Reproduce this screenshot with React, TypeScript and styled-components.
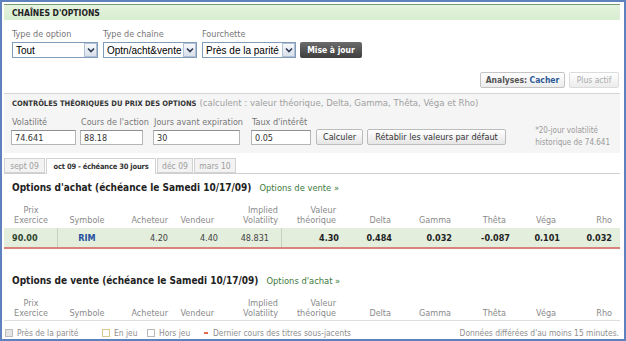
import React from "react";
import styled, { createGlobalStyle } from "styled-components";

const GlobalStyle = createGlobalStyle`
  html, body { margin: 0; padding: 0; background: #fff; }
  body { font-family: "DejaVu Sans Condensed", "DejaVu Sans", sans-serif; }
  * { box-sizing: border-box; }
`;

type Col = { w: number; head: string[]; ha: "left" | "center" | "right"; da: "left" | "center" | "right"; hp: number; dp: number };

const columns: Col[] = [
  { w: 54, head: ["Prix", "Exercice"], ha: "center", da: "left", hp: 0, dp: 8 },
  { w: 58, head: ["Symbole"], ha: "center", da: "center", hp: 0, dp: 0 },
  { w: 56, head: ["Acheteur"], ha: "right", da: "right", hp: 4, dp: 4 },
  { w: 46, head: ["Vendeur"], ha: "right", da: "right", hp: 4, dp: 0 },
  { w: 64, head: ["Implied", "Volatility"], ha: "right", da: "right", hp: 4, dp: 12 },
  { w: 58, head: ["Valeur", "théorique"], ha: "right", da: "right", hp: 4, dp: 1 },
  { w: 55, head: ["Delta"], ha: "right", da: "right", hp: 4, dp: 3 },
  { w: 60, head: ["Gamma"], ha: "right", da: "right", hp: 4, dp: 3 },
  { w: 55, head: ["Thêta"], ha: "right", da: "right", hp: 4, dp: 0 },
  { w: 50, head: ["Véga"], ha: "right", da: "right", hp: 4, dp: 0 },
  { w: 60, head: ["Rho"], ha: "right", da: "right", hp: 8, dp: 8 },
];

const callRow = [
  { v: "90.00", bold: true, tone: "strike" },
  { v: "RIM", bold: true, tone: "link" },
  { v: "4.20" },
  { v: "4.40" },
  { v: "48.831" },
  { v: "4.30", bold: true },
  { v: "0.484", bold: true },
  { v: "0.032", bold: true },
  { v: "-0.087", bold: true },
  { v: "0.101", bold: true },
  { v: "0.032", bold: true },
];

const gridTemplate = columns.map((c) => `${c.w}px`).join(" ");

const Chevron = () => (
  <svg width="8" height="6" viewBox="0 0 8 6">
    <path d="M1 1.5 L4 4.5 L7 1.5" fill="none" stroke="#2b3a55" strokeWidth="1.6" />
  </svg>
);

const TableHead: React.FC<{ underline?: boolean }> = ({ underline }) => (
  <HeadRow $underline={underline}>
    {columns.map((c, i) => (
      <HeadCell key={i} $align={c.ha} $pad={c.hp}>
        {c.head.map((l, j) => (
          <div key={j}>{l}</div>
        ))}
      </HeadCell>
    ))}
  </HeadRow>
);

export default function App() {
  return (
    <>
      <GlobalStyle />
      <Frame>
        <Header>CHAÎNES D'OPTIONS</Header>

        <Filters>
          <Field $w={86}>
            <FieldLabel>Type de option</FieldLabel>
            <Select>
              Tout
              <Arrow>
                <Chevron />
              </Arrow>
            </Select>
          </Field>
          <Field $w={94}>
            <FieldLabel>Type de chaîne</FieldLabel>
            <Select>
              Optn/acht&amp;vente
              <Arrow>
                <Chevron />
              </Arrow>
            </Select>
          </Field>
          <Field $w={94}>
            <FieldLabel>Fourchette</FieldLabel>
            <Select>
              Près de la parité
              <Arrow>
                <Chevron />
              </Arrow>
            </Select>
          </Field>
          <DarkButton>Mise à jour</DarkButton>
        </Filters>

        <AnalysesRow>
          <LightButton $w={85}>
            <Strong>Analyses:</Strong>&nbsp;<BlueStrong>Cacher</BlueStrong>
          </LightButton>
          <LightButton $w={50} $muted>
            Plus actif
          </LightButton>
        </AnalysesRow>

        <Theory>
          <TheoryTitle>
            <TheoryCaps>CONTRÔLES THÉORIQUES DU PRIX DES OPTIONS</TheoryCaps>
            <Muted>(calculent : valeur théorique, Delta, Gamma, Thêta, Véga et Rho)</Muted>
          </TheoryTitle>
          <TheoryRow>
            <InputField $w={69}>
              <FieldLabel>Volatilité</FieldLabel>
              <TextInput $w={65}>74.641</TextInput>
            </InputField>
            <InputField $w={73}>
              <FieldLabel>Cours de l'action</FieldLabel>
              <TextInput $w={63}>88.18</TextInput>
            </InputField>
            <InputField $w={98}>
              <FieldLabel>Jours avant expiration</FieldLabel>
              <TextInput $w={87}>30</TextInput>
            </InputField>
            <InputField $w={64}>
              <FieldLabel>Taux d'intérêt</FieldLabel>
              <TextInput $w={60}>0.05</TextInput>
            </InputField>
            <GreyButton $w={47}>Calculer</GreyButton>
            <GreyButton $w={139}>Rétablir les valeurs par défaut</GreyButton>
            <Note>
              *20-jour volatilité
              <br />
              historique de 74.641
            </Note>
          </TheoryRow>
        </Theory>

        <Tabs>
          <Tab $w={41}>sept 09</Tab>
          <Tab $w={110} $active>
            oct 09 - échéance 30 jours
          </Tab>
          <Tab $w={36}>déc 09</Tab>
          <Tab $w={42}>mars 10</Tab>
        </Tabs>

        <SectionTitle>
          Options d'achat (échéance le Samedi 10/17/09)
          <GreenLink>Options de vente »</GreenLink>
        </SectionTitle>
        <TableHead />
        <DataRow>
          {callRow.map((d, i) => (
            <DataCell
              key={i}
              $align={columns[i].da}
              $pad={columns[i].dp}
              $bold={!!d.bold}
              $tone={d.tone}
              $divider={i === 0 || i === 4}
            >
              {d.v}
            </DataCell>
          ))}
        </DataRow>

        <SectionTitle $gap={26}>
          Options de vente (échéance le Samedi 10/17/09)
          <GreenLink>Options d'achat »</GreenLink>
        </SectionTitle>
        <TableHead underline />

        <Footer>
          <Legend $w={97}>
            <Swatch $bg="#e4e4e4" $border="#bdbdbd" />
            Près de la parité
          </Legend>
          <Legend $w={45}>
            <Swatch $bg="#fff" $border="#d8c98a" />
            En jeu
          </Legend>
          <Legend $w={57}>
            <Swatch $bg="#fff" $border="#b8b8b8" />
            Hors jeu
          </Legend>
          <Legend>
            <Dash />
            Dernier cours des titres sous-jacents
          </Legend>
          <Delayed>Données différées d'au moins 15 minutes.</Delayed>
        </Footer>
      </Frame>
    </>
  );
}

const Frame = styled.div`
  width: 626px;
  height: 341px;
  border: 2px solid #5f82bf;
  padding: 2px 4px 0 2px;
  overflow: hidden;
  color: #333;
  font-size: 9px;
`;

const Header = styled.div`
  height: 16px;
  border-top: 1px solid #7a9a7a;
  background: linear-gradient(#e4f3de, #d8edd0);
  padding-left: 8px;
  display: flex;
  align-items: center;
  font-weight: bold;
  font-size: 8.5px;
  color: #222;
`;

const Filters = styled.div`
  display: flex;
  align-items: flex-end;
  gap: 5px;
  padding: 9px 0 0 8px;
`;

const Field = styled.div<{ $w: number }>`
  display: flex;
  flex-direction: column;
  gap: 3px;
  width: ${(p) => p.$w}px;
`;

const FieldLabel = styled.span`
  font-size: 9px;
  line-height: 10px;
  color: #777;
  white-space: nowrap;
`;

const Select = styled.div`
  height: 16px;
  border: 1px solid #7f9db9;
  background: #fff;
  display: flex;
  align-items: center;
  padding-left: 3px;
  font-family: "Liberation Sans", Arial, sans-serif;
  font-size: 10px;
  color: #000;
  white-space: nowrap;
`;

const Arrow = styled.span`
  margin-left: auto;
  width: 13px;
  height: 14px;
  border: 1px solid #b2c0d6;
  background: linear-gradient(#f7f8fb, #d9e0ea);
  display: flex;
  align-items: center;
  justify-content: center;
`;

const DarkButton = styled.div`
  margin-left: -1px;
  width: 62px;
  height: 16px;
  border-radius: 2px;
  background: linear-gradient(#6b6b6b, #3e3e3e);
  color: #fff;
  font-weight: bold;
  font-size: 8.5px;
  display: flex;
  align-items: center;
  justify-content: center;
`;

const AnalysesRow = styled.div`
  display: flex;
  justify-content: flex-end;
  gap: 4px;
  margin-top: 14px;
  padding-right: 1px;
`;

const LightButton = styled.div<{ $w: number; $muted?: boolean }>`
  width: ${(p) => p.$w}px;
  height: 16px;
  border: 1px solid ${(p) => (p.$muted ? "#dcdcdc" : "#c4c4c4")};
  border-radius: 2px;
  background: linear-gradient(#ffffff, #ececec);
  color: ${(p) => (p.$muted ? "#aaa" : "#555")};
  font-size: 8.5px;
  display: flex;
  align-items: center;
  justify-content: center;
  white-space: nowrap;
`;

const Strong = styled.span`
  font-weight: bold;
  color: #555;
`;

const BlueStrong = styled.span`
  font-weight: bold;
  color: #2d5b98;
`;

const Theory = styled.div`
  margin-top: 5px;
  height: 60px;
  border-top: 1px solid #d6d6d6;
  background: #f5f5f5;
  padding: 4px 0 0 8px;
`;

const TheoryTitle = styled.div`
  display: flex;
  align-items: baseline;
  gap: 3px;
  line-height: 10px;
  white-space: nowrap;
`;

const TheoryCaps = styled.span`
  font-weight: bold;
  font-size: 7.5px;
  color: #333;
`;

const Muted = styled.span`
  font-size: 9.5px;
  color: #a0a0a0;
`;

const TheoryRow = styled.div`
  display: flex;
  align-items: flex-end;
  margin-top: 8px;
`;

const InputField = styled.div<{ $w: number }>`
  display: flex;
  flex-direction: column;
  gap: 3px;
  width: ${(p) => p.$w}px;
`;

const TextInput = styled.div<{ $w: number }>`
  width: ${(p) => p.$w}px;
  height: 15px;
  margin-left: -1px;
  border: 1px solid #b5b5b5;
  border-top-color: #8f8f8f;
  background: #fff;
  padding-left: 3px;
  display: flex;
  align-items: center;
  color: #333;
`;

const GreyButton = styled.div<{ $w: number }>`
  width: ${(p) => p.$w}px;
  height: 16px;
  margin-right: 4px;
  border: 1px solid #bcbcbc;
  border-radius: 2px;
  background: linear-gradient(#ffffff, #e6e6e6);
  color: #333;
  display: flex;
  align-items: center;
  justify-content: center;
  white-space: nowrap;
`;

const Note = styled.div`
  margin-left: auto;
  margin-right: 10px;
  margin-bottom: -4px;
  line-height: 12px;
  font-size: 8px;
  color: #9a9a9a;
  white-space: nowrap;
`;

const Tabs = styled.div`
  margin-top: 5px;
  height: 16px;
  display: flex;
  gap: 1px;
  border-bottom: 1px solid #cfcfcf;
`;

const Tab = styled.div<{ $active?: boolean; $w: number }>`
  width: ${(p) => p.$w}px;
  height: ${(p) => (p.$active ? 16 : 15)}px;
  display: flex;
  align-items: center;
  justify-content: center;
  border: 1px solid #d2d2d2;
  border-bottom: ${(p) => (p.$active ? "none" : "1px solid #d2d2d2")};
  background: ${(p) => (p.$active ? "#fff" : "#f3f3f3")};
  color: ${(p) => (p.$active ? "#333" : "#a0a0a0")};
  font-weight: ${(p) => (p.$active ? "bold" : "normal")};
  font-size: ${(p) => (p.$active ? 7.5 : 8.5)}px;
  letter-spacing: ${(p) => (p.$active ? "-0.2px" : "0")};
  white-space: nowrap;
`;

const SectionTitle = styled.div<{ $gap?: number }>`
  margin-top: ${(p) => p.$gap ?? 8}px;
  padding-left: 8px;
  line-height: 12px;
  font-weight: bold;
  font-size: 10px;
  color: #222;
  white-space: nowrap;
`;

const GreenLink = styled.span`
  margin-left: 8px;
  font-weight: normal;
  font-size: 9.3px;
  color: #3b7a3b;
`;

const HeadRow = styled.div<{ $underline?: boolean }>`
  margin-top: 11px;
  display: grid;
  grid-template-columns: ${gridTemplate};
  align-items: end;
  padding-bottom: ${(p) => (p.$underline ? 2 : 0)}px;
  border-bottom: ${(p) => (p.$underline ? "1px solid #dedede" : "none")};
`;

const HeadCell = styled.div<{ $align: string; $pad: number }>`
  text-align: ${(p) => p.$align};
  padding-right: ${(p) => p.$pad}px;
  line-height: 10px;
  font-size: 9px;
  color: #8a8a8a;
  white-space: nowrap;
`;

const DataRow = styled.div`
  margin-top: 3px;
  height: 21px;
  display: grid;
  grid-template-columns: ${gridTemplate};
  background: #e3eedd;
  border-bottom: 2px solid #d9837d;
`;

const DataCell = styled.div<{ $align: string; $pad: number; $bold: boolean; $tone?: string; $divider: boolean }>`
  display: flex;
  align-items: center;
  justify-content: ${(p) => (p.$align === "left" ? "flex-start" : p.$align === "center" ? "center" : "flex-end")};
  padding-left: ${(p) => (p.$align === "left" ? p.$pad : 0)}px;
  padding-right: ${(p) => (p.$align === "right" ? p.$pad : 0)}px;
  border-right: ${(p) => (p.$divider ? "1px solid #c4d3bf" : "none")};
  font-size: 9px;
  font-weight: ${(p) => (p.$bold ? "bold" : "normal")};
  color: ${(p) => (p.$tone === "link" ? "#24509c" : p.$tone === "strike" ? "#2f472f" : p.$bold ? "#222" : "#444")};
`;

const Footer = styled.div`
  margin-top: 4px;
  height: 16px;
  display: flex;
  align-items: center;
  padding-left: 1px;
  color: #8e8e8e;
  font-size: 8.4px;
  white-space: nowrap;
`;

const Legend = styled.div<{ $w?: number }>`
  ${(p) => (p.$w ? `width: ${p.$w}px;` : "")}
  display: flex;
  align-items: center;
  gap: 4px;
`;

const Swatch = styled.span<{ $bg: string; $border: string }>`
  width: 8px;
  height: 8px;
  background: ${(p) => p.$bg};
  border: 1px solid ${(p) => p.$border};
`;

const Dash = styled.span`
  width: 4px;
  height: 2px;
  background: #e06a4a;
  margin-right: 1px;
`;

const Delayed = styled.div`
  margin-left: auto;
  padding-right: 1px;
`;
